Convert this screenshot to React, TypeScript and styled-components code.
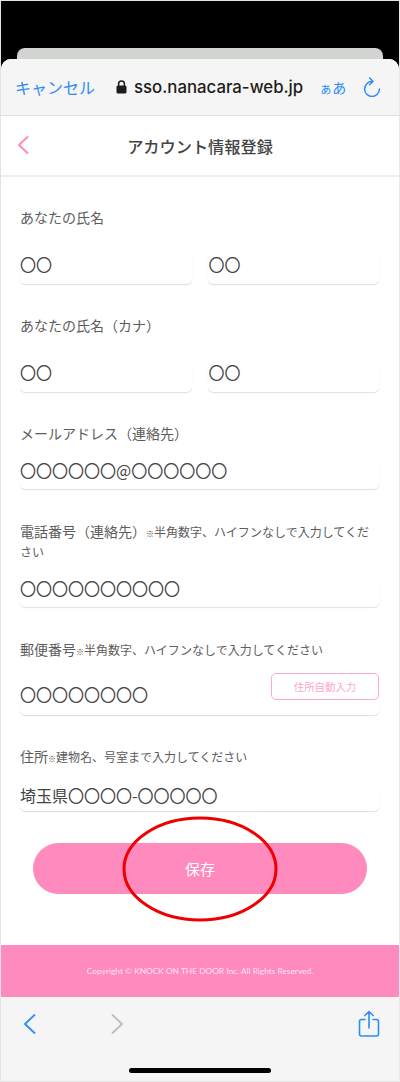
import React from "react";
import styled, { createGlobalStyle } from "styled-components";

const GlobalStyle = createGlobalStyle`
    html, body {
        margin: 0;
        padding: 0;
        background: #fff;
    }
    * {
        box-sizing: border-box;
    }
`;

const JP = `"Noto Sans CJK JP", "Noto Sans", sans-serif`;
const PINK = "#ff8abd";
const BLUE = "#2d8cf6";

const Screen = styled.div`
    position: relative;
    width: 400px;
    height: 1082px;
    overflow: hidden;
    display: flex;
    flex-direction: column;
    background: #000;
    border: 1px solid #e4e4e4;
    border-right-color: #e8e8e8;
    font-family: ${JP};
    text-spacing-trim: space-all;
`;

const BackSheet = styled.div`
    height: 11px;
    margin: 47px 16px 0;
    background: #d2d4d1;
    border-radius: 8px 8px 0 0;
    flex: none;
`;

const Sheet = styled.div`
    flex: 1;
    display: flex;
    flex-direction: column;
    background: #fff;
    border-radius: 10px 10px 0 0;
    overflow: hidden;
`;

const NavBar = styled.div`
    height: 57px;
    flex: none;
    display: flex;
    align-items: center;
    padding: 0 18px 0 14px;
    background: #f5f5f5;
    border-bottom: 1px solid #dedede;
`;

const Cancel = styled.span`
    width: 96px;
    flex: none;
    color: ${BLUE};
    font-size: 16px;
    white-space: nowrap;
`;

const Url = styled.span`
    display: flex;
    align-items: center;
    gap: 7px;
    margin-left: 5px;
    flex: none;
    color: #1c1c1c;
    font-family: Inter, "Liberation Sans", sans-serif;
    font-size: 16.8px;
    font-weight: 500;
    white-space: nowrap;
`;

const Aa = styled.span`
    margin-left: 16px;
    color: ${BLUE};
    font-size: 14px;
    white-space: nowrap;
    small {
        font-size: 13px;
    }
`;

const Reload = styled.svg`
    margin-left: auto;
    flex: none;
`;

const PageHeader = styled.header`
    position: relative;
    height: 61px;
    flex: none;
    display: flex;
    align-items: center;
    justify-content: center;
    border-bottom: 2px solid #eeeeee;
    color: #444;
    font-size: 16.2px;
    font-weight: 500;
`;

const BackLink = styled.svg`
    position: absolute;
    left: 15px;
    top: 19px;
`;

const Form = styled.form`
    flex: 1;
    display: flex;
    flex-direction: column;
    padding: 0 20px 0 19px;
`;

const Field = styled.div<{ $top: number }>`
    display: flex;
    flex-direction: column;
    margin-top: ${({ $top }) => $top}px;
`;

const Label = styled.label`
    color: #5c5c5c;
    font-size: 14px;
    line-height: 20px;
    small {
        font-size: 12px;
        line-height: 1;
    }
    i {
        color: #444;
        font-style: normal;
        font-weight: 700;
        font-size: 8px;
        line-height: 1;
    }
`;

const Row = styled.div<{ $gap: number }>`
    display: flex;
    gap: 16px;
    margin-top: ${({ $gap }) => $gap}px;
`;

const Input = styled.div<{ $height: number }>`
    flex: 1;
    position: relative;
    height: ${({ $height }) => $height}px;
    color: #444;
    font-size: 16px;
    line-height: 24px;
    white-space: nowrap;
    border-radius: 5px;
    box-shadow: 0 1px 1px rgba(0, 0, 0, 0.13);
    & + & {
        text-indent: 1px;
    }
`;

const AutoFill = styled.button`
    position: absolute;
    right: 0;
    top: -9px;
    width: 108px;
    height: 27px;
    padding: 0;
    background: #fff;
    border: 1px solid #ffa9d0;
    border-radius: 5px;
    color: #ffa6cd;
    font-family: ${JP};
    font-size: 10.4px;
`;

const Save = styled.button`
    height: 51px;
    margin: 32px 12px 0 13px;
    flex: none;
    background: ${PINK};
    border: none;
    border-radius: 26px;
    color: #fff;
    font-family: ${JP};
    font-size: 15px;
`;

const Footer = styled.footer`
    height: 52px;
    flex: none;
    display: flex;
    align-items: center;
    justify-content: center;
    background: ${PINK};
    color: #ffe3ef;
    font-family: Lato, "Liberation Sans", sans-serif;
    font-size: 8.35px;
    white-space: nowrap;
`;

const ToolBar = styled.div`
    position: relative;
    height: 84px;
    flex: none;
    display: flex;
    align-items: flex-start;
    padding: 16px 19px 0 22px;
    background: #f5f5f5;
`;

const ForwardIcon = styled.svg`
    margin-left: 73px;
`;

const ShareIcon = styled.svg`
    margin-left: auto;
    margin-top: -3px;
`;

const HomeBar = styled.div`
    position: absolute;
    left: 128px;
    bottom: 8px;
    width: 142px;
    height: 5px;
    border-radius: 3px;
    background: #000;
`;

const Annotation = styled.svg`
    position: absolute;
    left: 121px;
    top: 815px;
    pointer-events: none;
`;

export default function App() {
    return (
        <Screen>
            <GlobalStyle />
            <BackSheet />
            <Sheet>
                <NavBar>
                    <Cancel>キャンセル</Cancel>
                    <Url>
                        <svg width="11" height="14" viewBox="0 0 11 14">
                            <path d="M2.6 6V4a2.9 2.9 0 0 1 5.8 0v2" fill="none" stroke="#1c1c1c" strokeWidth="1.5" />
                            <rect x="0.5" y="5.5" width="10" height="8" rx="1.5" fill="#1c1c1c" />
                        </svg>
                        sso.nanacara-web.jp
                    </Url>
                    <Aa><small>ぁ</small>あ</Aa>
                    <Reload width="18" height="20" viewBox="0 0 18 20" fill="none" stroke={BLUE} strokeWidth="1.5" strokeLinecap="round" strokeLinejoin="round">
                        <path d="M9 4.6a7.4 7.4 0 1 0 7.4 7.4" />
                        <path d="M6.6 1l3.4 3.5-3.4 3.3" />
                    </Reload>
                </NavBar>
                <PageHeader>
                    <BackLink width="14" height="20" viewBox="0 0 14 20" fill="none" stroke={PINK} strokeWidth="2" strokeLinecap="round" strokeLinejoin="round">
                        <path d="M11.500 2L3 10l8.500 8" />
                    </BackLink>
                    アカウント情報登録
                </PageHeader>
                <Form>
                    <Field $top={30}>
                        <Label>あなたの氏名</Label>
                        <Row $gap={25}>
                            <Input $height={32}>〇〇</Input>
                            <Input $height={32}>〇〇</Input>
                        </Row>
                    </Field>
                    <Field $top={31}>
                        <Label>あなたの氏名（カナ）</Label>
                        <Row $gap={25}>
                            <Input $height={32}>〇〇</Input>
                            <Input $height={32}>〇〇</Input>
                        </Row>
                    </Field>
                    <Field $top={31}>
                        <Label>メールアドレス（連絡先）</Label>
                        <Row $gap={15}>
                            <Input $height={31}>〇〇〇〇〇〇@〇〇〇〇〇〇</Input>
                        </Row>
                    </Field>
                    <Field $top={32}>
                        <Label>
                            電話番号（連絡先）<i>※</i><small>半角数字、ハイフンなしで入力してください</small>
                        </Label>
                        <Row $gap={15}>
                            <Input $height={31}>〇〇〇〇〇〇〇〇〇〇</Input>
                        </Row>
                    </Field>
                    <Field $top={32}>
                        <Label>
                            郵便番号<i>※</i><small>半角数字、ハイフンなしで入力してください</small>
                        </Label>
                        <Row $gap={23}>
                            <Input $height={33}>
                                〇〇〇〇〇〇〇〇
                                <AutoFill type="button">住所自動入力</AutoFill>
                            </Input>
                        </Row>
                    </Field>
                    <Field $top={31}>
                        <Label>
                            住所<i>※</i><small>建物名、号室まで入力してください</small>
                        </Label>
                        <Row $gap={17}>
                            <Input $height={28}>埼玉県〇〇〇〇-〇〇〇〇〇</Input>
                        </Row>
                    </Field>
                    <Save type="button">保存</Save>
                </Form>
                <Footer>Copyright © KNOCK ON THE DOOR Inc. All Rights Reserved.</Footer>
                <ToolBar>
                    <svg width="14" height="22" viewBox="0 0 14 22" fill="none" stroke={BLUE} strokeWidth="1.8" strokeLinecap="round" strokeLinejoin="round">
                        <path d="M11.500 2L2 11l9.500 9" />
                    </svg>
                    <ForwardIcon width="14" height="22" viewBox="0 0 14 22" fill="none" stroke="#bdbdbd" strokeWidth="1.8" strokeLinecap="round" strokeLinejoin="round">
                        <path d="M2.500 2L12 11l-9.500 9" />
                    </ForwardIcon>
                    <ShareIcon width="22" height="28" viewBox="0 0 22 28" fill="none" stroke={BLUE} strokeWidth="1.6" strokeLinecap="round" strokeLinejoin="round">
                        <path d="M7 9.500H3.500a2 2 0 0 0-2 2V24a2 2 0 0 0 2 2h15a2 2 0 0 0 2-2V11.500a2 2 0 0 0-2-2H15" />
                        <path d="M11 18V1.500M6.800 5.500L11 1.500l4.200 4" />
                    </ShareIcon>
                    <HomeBar />
                </ToolBar>
            </Sheet>
            <Annotation width="158" height="108" viewBox="0 0 158 108">
                <ellipse cx="78" cy="53" rx="76" ry="51" fill="none" stroke="#ee0000" strokeWidth="3" />
            </Annotation>
        </Screen>
    );
}
